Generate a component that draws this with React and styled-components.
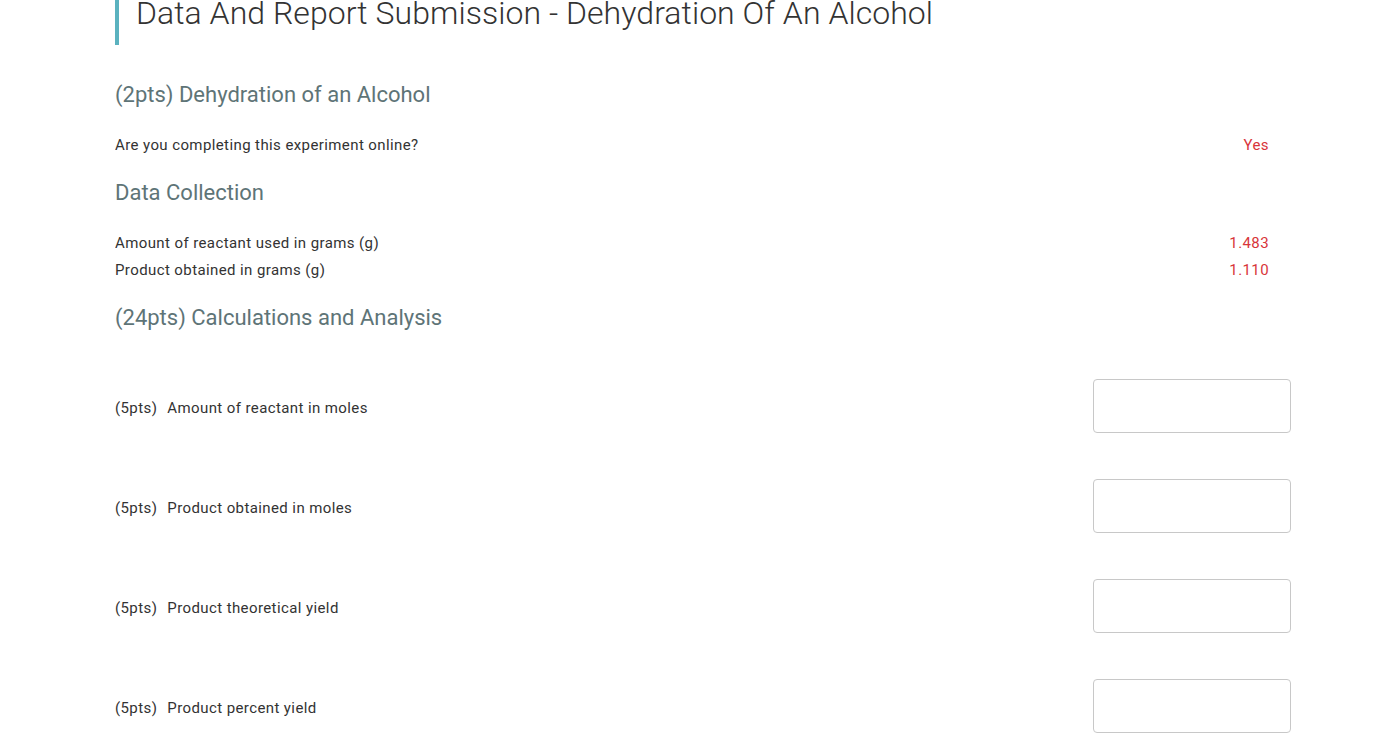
import styled, { createGlobalStyle } from "styled-components";

const GlobalStyle = createGlobalStyle`
    body {
        margin: 0;
        background: #fff;
        font-family: Roboto, "Liberation Sans", sans-serif;
        color: #333;
    }
`
const Page = styled.div`
    width: 1176px;
    margin-left: 115px;
    overflow: hidden;
`
const Title = styled.h1`
    margin: -9px 0 0 0;
    padding: 0 0 9px 17px;
    border-left: 4px solid #5bb2bf;
    font-size: 32px;
    font-weight: 300;
    line-height: 45px;
    letter-spacing: 0.05px;
    color: #333;
`
const SectionHeading = styled.h2`
    margin: ${(props) => (props.first ? "35px" : "19px")} 0 22px 0;
    font-size: 22px;
    font-weight: 400;
    line-height: 30px;
    color: #5e7477;
`
const InfoRow = styled.div`
    display: flex;
    justify-content: space-between;
    align-items: center;
    padding-right: 22px;
    font-size: 15px;
    letter-spacing: 0.4px;
    line-height: 27px;
`
const Value = styled.span`
    color: #d8353a;
`
const QuestionRow = styled.div`
    display: flex;
    justify-content: space-between;
    align-items: center;
    height: 100px;
    font-size: 15px;
    letter-spacing: 0.4px;
`
const Label = styled.span`
    padding-top: 3px;
`
const Points = styled.span`
    margin-right: 10px;
`
const AnswerInput = styled.input`
    width: 198px;
    height: 54px;
    box-sizing: border-box;
    border: 1px solid #c8c8c8;
    border-radius: 4px;
    outline: none;
    padding: 6px 12px;
    font-family: inherit;
    font-size: 15px;
`
const Questions = styled.div`
    margin-top: 23px;
`

const questions = [
    "Amount of reactant in moles",
    "Product obtained in moles",
    "Product theoretical yield",
    "Product percent yield",
]

const App = () => {
    return (
        <Page>
            <GlobalStyle />
            <Title>Data And Report Submission - Dehydration Of An Alcohol</Title>
            <SectionHeading first>(2pts) Dehydration of an Alcohol</SectionHeading>
            <InfoRow>
                Are you completing this experiment online?
                <Value>Yes</Value>
            </InfoRow>
            <SectionHeading>Data Collection</SectionHeading>
            <InfoRow>
                Amount of reactant used in grams (g)
                <Value>1.483</Value>
            </InfoRow>
            <InfoRow>
                Product obtained in grams (g)
                <Value>1.110</Value>
            </InfoRow>
            <SectionHeading>(24pts) Calculations and Analysis</SectionHeading>
            <Questions>
                {questions.map((q) => (
                    <QuestionRow key={q}>
                        <Label><Points>(5pts)</Points>{q}</Label>
                        <AnswerInput type="text" />
                    </QuestionRow>
                ))}
            </Questions>
        </Page>
    )
}

export default App;
